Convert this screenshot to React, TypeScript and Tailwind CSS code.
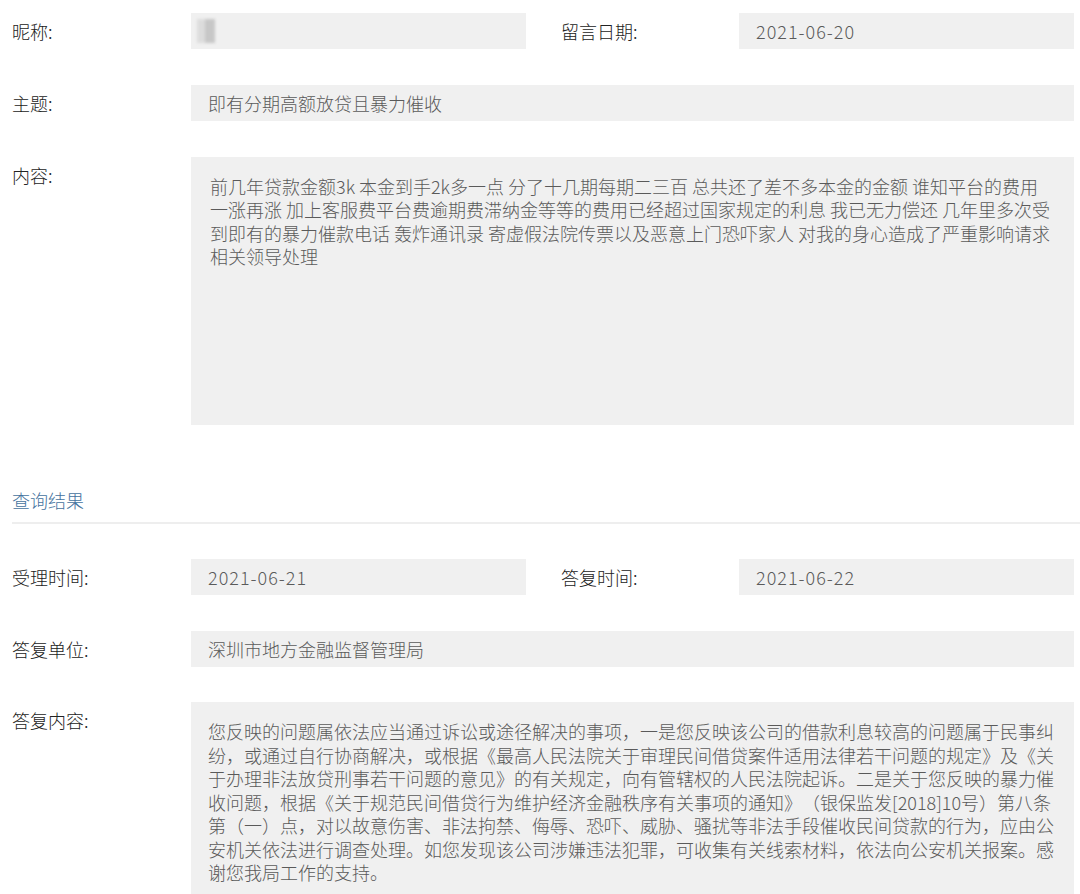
import React from 'react';

const FONT = { fontFamily: '"Noto Sans CJK SC", "Noto Sans", sans-serif' };

const contentLines = [
  '前几年贷款金额3k 本金到手2k多一点 分了十几期每期二三百 总共还了差不多本金的金额 谁知平台的费用',
  '一涨再涨 加上客服费平台费逾期费滞纳金等等的费用已经超过国家规定的利息 我已无力偿还 几年里多次受',
  '到即有的暴力催款电话 轰炸通讯录 寄虚假法院传票以及恶意上门恐吓家人 对我的身心造成了严重影响请求',
  '相关领导处理',
];

const replyLines = [
  '您反映的问题属依法应当通过诉讼或途径解决的事项，一是您反映该公司的借款利息较高的问题属于民事纠',
  '纷，或通过自行协商解决，或根据《最高人民法院关于审理民间借贷案件适用法律若干问题的规定》及《关',
  '于办理非法放贷刑事若干问题的意见》的有关规定，向有管辖权的人民法院起诉。二是关于您反映的暴力催',
  '收问题，根据《关于规范民间借贷行为维护经济金融秩序有关事项的通知》（银保监发[2018]10号）第八条',
  '第（一）点，对以故意伤害、非法拘禁、侮辱、恐吓、威胁、骚扰等非法手段催收民间贷款的行为，应由公',
  '安机关依法进行调查处理。如您发现该公司涉嫌违法犯罪，可收集有关线索材料，依法向公安机关报案。感',
  '谢您我局工作的支持。',
];

const Label: React.FC<{ text: string; className?: string }> = ({ text, className = '' }) => (
  <div className={`h-[36px] flex items-center text-[18px] font-light text-[#222] shrink-0 ${className}`}>{text}</div>
);

const Field: React.FC<{ children?: React.ReactNode; className?: string }> = ({ children, className = '' }) => (
  <div className={`h-[36px] bg-[#f0f0f0] flex items-center pl-[17px] text-[18px] font-light text-[#5a5a5a] ${className}`}>
    {children}
  </div>
);

const App: React.FC = () => {
  return (
    <div className="w-[1080px] h-[894px] overflow-hidden bg-white pl-[12px] pt-[13px]" style={FONT}>
      {/* 昵称 / 留言日期 */}
      <div className="flex">
        <Label text="昵称:" className="w-[179px]" />
        <Field className="w-[335px] !pl-[6px]">
          <div className="flex h-[24px] blur-[1.5px] opacity-80">
            <div className="w-[8px] bg-[#d8d8d8]" />
            <div className="w-[10px] bg-[#bdbdbd]" />
          </div>
        </Field>
        <Label text="留言日期:" className="w-[178px] ml-[35px]" />
        <Field className="w-[335px] tracking-[1px]">2021-06-20</Field>
      </div>

      {/* 主题 */}
      <div className="flex mt-[36px]">
        <Label text="主题:" className="w-[179px]" />
        <Field className="w-[883px]">即有分期高额放贷且暴力催收</Field>
      </div>

      {/* 内容 */}
      <div className="flex mt-[36px]">
        <Label text="内容:" className="w-[179px]" />
        <div className="w-[883px] h-[268px] bg-[#f0f0f0] pl-[19px] pt-[18px] text-[18px] font-light leading-[23.4px] text-[#5a5a5a]">
          {contentLines.map((l, i) => (
            <div key={i} className="whitespace-nowrap">{l}</div>
          ))}
        </div>
      </div>

      {/* 查询结果 */}
      <div className="mt-[63px] pb-[10px] border-b-2 border-[#eeeeee] text-[18px] font-light leading-[24px] text-[#45729e]">
        查询结果
      </div>

      {/* 受理时间 / 答复时间 */}
      <div className="flex mt-[35px]">
        <Label text="受理时间:" className="w-[179px]" />
        <Field className="w-[335px] tracking-[1px]">2021-06-21</Field>
        <Label text="答复时间:" className="w-[178px] ml-[35px]" />
        <Field className="w-[335px] tracking-[1px]">2021-06-22</Field>
      </div>

      {/* 答复单位 */}
      <div className="flex mt-[36px]">
        <Label text="答复单位:" className="w-[179px]" />
        <Field className="w-[883px]">深圳市地方金融监督管理局</Field>
      </div>

      {/* 答复内容 */}
      <div className="flex mt-[35px]">
        <Label text="答复内容:" className="w-[179px]" />
        <div className="w-[883px] h-[230px] bg-[#f0f0f0] pl-[17px] pt-[18px] text-[18px] font-light leading-[23.5px] text-[#5a5a5a] [text-spacing-trim:space-all]">
          {replyLines.map((l, i) => (
            <div key={i} className="whitespace-nowrap">{l}</div>
          ))}
        </div>
      </div>
    </div>
  );
};

export default App;
